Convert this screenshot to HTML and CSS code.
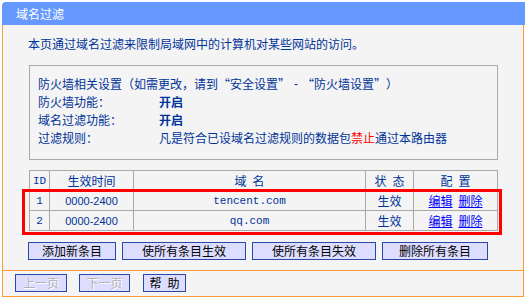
FILE: index.html
```html
<!DOCTYPE html>
<html lang="zh-CN">
<head>
<meta charset="utf-8">
<title>域名过滤</title>
<link rel="stylesheet" href="styles.css">
</head>
<body>
<div class="frame">
  <div class="title">域名过滤</div>
  <div class="panel">
    <div class="content">
      <p class="intro">本页通过域名过滤来限制局域网中的计算机对某些网站的访问。</p>
      <div class="infobox">
        <div class="line">防火墙相关设置<span class="p pl">（</span>如需更改<span class="p pl">，</span>请到<span class="p pr">“</span>安全设置<span class="p pl">”</span><span class="p pc dash">-</span><span class="p pr">“</span>防火墙设置<span class="p pl">”</span><span class="p pc">）</span></div>
        <div class="line"><span class="label">防火墙功能：</span><b class="val">开启</b></div>
        <div class="line"><span class="label">域名过滤功能：</span><b class="val">开启</b></div>
        <div class="line"><span class="label">过滤规则：</span><span>凡是符合已设域名过滤规则的数据包<span class="red">禁止</span>通过本路由器</span></div>
      </div>
      <div class="tablewrap">
        <table class="rules">
          <colgroup>
            <col class="c-id"><col class="c-time"><col class="c-domain"><col class="c-state"><col class="c-conf">
          </colgroup>
          <tr>
            <th class="mono">ID</th>
            <th>生效时间</th>
            <th>域&ensp;名</th>
            <th>状&ensp;态</th>
            <th>配&ensp;置</th>
          </tr>
          <tr>
            <td class="mono">1</td>
            <td class="num">0000-2400</td>
            <td class="mono dom">tencent.com</td>
            <td>生效</td>
            <td><a href="#">编辑</a><a class="second" href="#">删除</a></td>
          </tr>
          <tr>
            <td class="mono">2</td>
            <td class="num">0000-2400</td>
            <td class="mono dom">qq.com</td>
            <td>生效</td>
            <td><a href="#">编辑</a><a class="second" href="#">删除</a></td>
          </tr>
        </table>
        <div class="highlight"></div>
      </div>
      <div class="actions">
        <button class="btn w88">添加新条目</button>
        <button class="btn w124">使所有条目生效</button>
        <button class="btn w124">使所有条目失效</button>
        <button class="btn w106">删除所有条目</button>
      </div>
    </div>
    <div class="footer">
      <button class="btn fb w52 disabled">上一页</button>
      <button class="btn fb w51 disabled">下一页</button>
      <button class="btn fb w43">帮&ensp;助</button>
    </div>
  </div>
</div>
</body>
</html>
```

FILE: styles.css
```css
html, body {
  margin: 0;
  padding: 0;
  background: #ffffff;
}
body {
  font-family: "Noto Sans CJK SC", "Liberation Sans", sans-serif;
  font-size: 12px;
  color: #003399;
}
.frame {
  margin: 2px 0 0 2px;
  width: 523px;
}
.title {
  height: 23px;
  line-height: 23px;
  background: #6699ff;
  color: #ffffff;
  padding-left: 14px;
  border-top-left-radius: 4px;
}
.panel {
  width: 520px;
  background: #f4f4f4;
  border: 1px solid #ff9933;
  border-top: 0;
}
.content {
  padding: 10px 0 10px 25px;
}
.intro {
  margin: 0;
  line-height: 18px;
}
.infobox {
  margin: 12px 0 0 1px;
  width: 467px;
  border: 1px solid #a8a8a8;
  padding: 9px 0 12px 0;
}
.line {
  display: flex;
  height: 18px;
  line-height: 18px;
  padding-left: 8px;
  white-space: nowrap;
}
.p {
  display: inline-block;
  width: 12px;
  overflow: visible;
}
.pl { text-align: left; }
.pr { text-align: right; }
.pc { text-align: center; }
.dash {
  font-family: "Liberation Sans", sans-serif;
}
.label {
  width: 121px;
  flex: none;
}
.val {
  font-weight: bold;
}
.red {
  color: #ff0000;
}
.tablewrap {
  position: relative;
  margin: 10px 0 0 1px;
  width: 469px;
}
.rules {
  table-layout: fixed;
  width: 469px;
  border-collapse: separate;
  border-spacing: 0;
  border-right: 1px solid #a8a8a8;
  border-bottom: 1px solid #a8a8a8;
}
.c-id { width: 20px; }
.c-time { width: 84px; }
.c-domain { width: 232px; }
.c-state { width: 48px; }
.c-conf { width: 84px; }
.rules th, .rules td {
  height: 19px;
  padding: 0;
  border-left: 1px solid #a8a8a8;
  border-top: 1px solid #a8a8a8;
  text-align: center;
  font-weight: normal;
  line-height: 18px;
  white-space: nowrap;
}
.mono {
  font-family: "Liberation Mono", monospace;
  font-size: 11px;
}
.num {
  font-family: "Liberation Sans", sans-serif;
  font-size: 11px;
}
.rules a {
  color: #0000ff;
  text-decoration: underline;
}
.rules a.second {
  margin-left: 6px;
}
.highlight {
  position: absolute;
  left: -7px;
  top: 19px;
  width: 480px;
  height: 46px;
  box-sizing: border-box;
  border: 3px solid #ff0000;
  pointer-events: none;
}
.actions {
  display: flex;
  gap: 6px;
  margin-top: 11px;
}
.btn {
  box-sizing: border-box;
  height: 18px;
  padding: 0;
  margin: 0;
  background: #dddeff;
  border: 1px solid #2a48a8;
  color: #000000;
  font-family: "Noto Sans CJK SC", sans-serif;
  font-size: 12px;
  line-height: 16px;
}
.w88 { width: 88px; }
.w124 { width: 124px; }
.w106 { width: 106px; }
.w52 { width: 52px; }
.w51 { width: 51px; }
.w43 { width: 43px; }
.footer {
  display: flex;
  gap: 12px;
  border-top: 1px solid #ff9933;
  padding: 3px 0 4px 12px;
}
.footer .w43 {
  margin-left: 1px;
}
.disabled {
  color: #b4b4b4;
  text-shadow: 1px 1px 0 #ffffff;
}
```
